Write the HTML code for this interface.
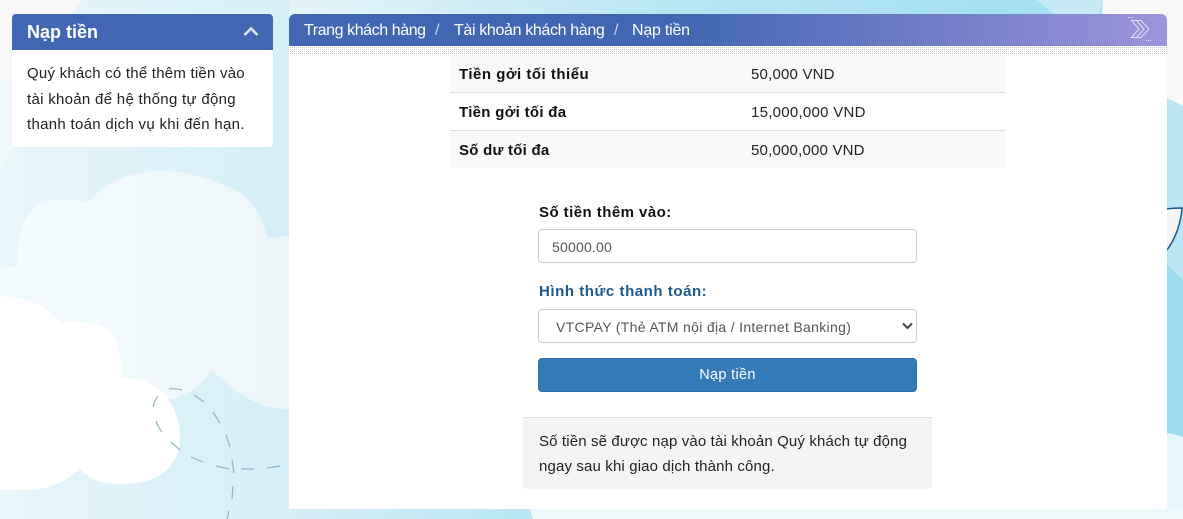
<!DOCTYPE html>
<html lang="vi">
<head>
<meta charset="utf-8">
<title>Nạp tiền</title>
<style>
html,body{margin:0;padding:0;}
body{width:1183px;height:519px;position:relative;overflow:hidden;background:#d8f0f8;font-family:"Liberation Sans","Noto Sans CJK SC",sans-serif;color:#222;}
.t{position:absolute;white-space:nowrap;font-size:15px;line-height:20px;}
.b{font-weight:bold;}
.box{position:absolute;box-sizing:border-box;}
#bg{position:absolute;left:0;top:0;}
.dots{position:absolute;left:289px;top:46px;width:878px;height:9px;background-color:#c6c6c6;background-image:linear-gradient(90deg,#fff 1px,transparent 1px),linear-gradient(180deg,#fff 1px,transparent 1px);background-size:2px 2px;}
</style>
</head>
<body>
<svg id="bg" width="1183" height="519" viewBox="0 0 1183 519">
<defs>
<linearGradient id="gTop" gradientUnits="userSpaceOnUse" x1="289" y1="0" x2="1000" y2="0"><stop offset="0" stop-color="#e4f4f9"/><stop offset="0.58" stop-color="#b6e5f4"/><stop offset="1" stop-color="#a6e0f3"/></linearGradient>
<linearGradient id="gLeft" gradientUnits="userSpaceOnUse" x1="0" y1="0" x2="289" y2="0"><stop offset="0" stop-color="#e9f6fa"/><stop offset="1" stop-color="#d4eff8"/></linearGradient>
<linearGradient id="gBot" gradientUnits="userSpaceOnUse" x1="289" y1="0" x2="530" y2="0"><stop offset="0" stop-color="#d6eff8"/><stop offset="1" stop-color="#b8e6f4"/></linearGradient>
<linearGradient id="gCloud" gradientUnits="userSpaceOnUse" x1="0" y1="0" x2="289" y2="0"><stop offset="0" stop-color="#f3fbfe"/><stop offset="1" stop-color="#eef6fa"/></linearGradient>
</defs>
<rect width="1183" height="519" fill="url(#gTop)"/>
<rect x="0" y="0" width="289" height="519" fill="url(#gLeft)"/>
<rect x="289" y="400" width="300" height="119" fill="url(#gBot)"/>
<polygon points="0,0 82,0 60,30 26,80 0,80" fill="#f7f7f7"/>
<polygon points="0,80 26,80 13,147 0,170" fill="#eff9fc"/>
<polygon points="1037,0 1103,0 1098,20 1060,20" fill="#c5e9f5"/>
<polygon points="1103,0 1183,0 1183,106 1167,98 1098,60" fill="#f8f8f8"/>
<polygon points="1167,98 1183,106 1183,280 1167,265" fill="#bbe6f4"/>
<polygon points="1167,265 1183,280 1183,519 1167,519" fill="#9cdcf0"/>
<path d="M1167 433C1173 434 1178 435 1183 437V519H1167Z" fill="#e8f7fc"/>
<path d="M530 509H1183V519H533Z" fill="#eef9fc"/>
<path d="M1167 250C1176 238 1181 222 1182 208L1167 209Z" fill="#f4f4f4"/>
<path d="M1167 209C1172 208 1178 208 1182 208C1181 222 1176 238 1167 250" fill="none" stroke="#14598a" stroke-width="1.5"/>
<path d="M0 267L18 267C16 225 30 200 60 200C70 199 80 201 89 202C110 178 140 170 165 171C190 172 215 180 235 190C255 200 262 220 268 238L289 236V409C260 410 240 395 212 371C195 392 180 398 170 399L0 420Z" fill="url(#gCloud)"/>
<path d="M0 297C25 296 45 305 61 323C80 321 100 320 112 335C120 345 122 360 122 378C140 377 160 385 172 405C180 420 182 440 178 452C170 475 150 484 120 484C100 484 88 478 79 468C70 480 50 490 25 490L0 490Z" fill="#fff"/>
<g stroke="#8fb4c9" stroke-width="1.2" fill="none">
<path d="M153 407Q154 401 158 396M169 389Q176 388 182 390M194 395L204 402M213 412L220 423M226 435L230 447M232 460L234 473M233 486L232 499M229 511L227 519M156 421Q158 427 162 432M171 442L180 450M191 457L203 462M216 466L229 469M241 469L254 469M267 468L280 466"/>
</g>
</svg>

<!-- Sidebar -->
<div class="box" style="left:12px;top:14px;width:261px;height:133px;background:#fff;border-radius:4px;"></div>
<div class="box" style="left:12px;top:14px;width:261px;height:36px;background:#4267b2;border-radius:4px 4px 0 0;"></div>
<div class="t b" style="left:27px;top:22px;color:#fff;font-size:18px;">Nạp tiền</div>
<svg style="position:absolute;left:243px;top:26px;" width="16" height="11" viewBox="0 0 16 11"><path d="M1.500 9L8 2.500L14.500 9" fill="none" stroke="#dfe4f0" stroke-width="2.600"/></svg>
<div class="t" style="left:27px;top:64px;letter-spacing:.23px;">Quý khách có thể thêm tiền vào</div>
<div class="t" style="left:27px;top:90px;letter-spacing:.3px;">tài khoản để hệ thống tự động</div>
<div class="t" style="left:27px;top:115px;letter-spacing:.3px;">thanh toán dịch vụ khi đến hạn.</div>

<!-- Main -->
<div class="box" style="left:289px;top:46px;width:878px;height:463px;background:#fff;"></div>
<div class="box" style="left:289px;top:14px;width:878px;height:32px;border-radius:6px 6px 0 0;background:linear-gradient(90deg,#4267b2 0%,#4267b2 45%,#9c94db 100%);"></div>
<div class="dots"></div>
<div class="t" style="left:304px;top:21px;color:#fff;font-size:16px;letter-spacing:-.42px;">Trang khách hàng</div>
<div class="t" style="left:435px;top:21px;color:#c9d3e8;font-size:16px;">/</div>
<div class="t" style="left:454px;top:21px;color:#fff;font-size:16px;letter-spacing:-.35px;">Tài khoản khách hàng</div>
<div class="t" style="left:614px;top:21px;color:#c9d3e8;font-size:16px;">/</div>
<div class="t" style="left:632px;top:21px;color:#fff;font-size:16px;letter-spacing:-.22px;">Nạp tiền</div>
<svg style="position:absolute;left:1125px;top:14px;" width="32" height="30" viewBox="1125 14 32 30">
<path d="M1131.500 20.500H1141L1149 29L1141 37.500H1131.500L1139 29Z M1136.500 20.500L1144 29L1136.500 37.500" fill="none" stroke="#eef0fa" stroke-width="1" opacity=".85"/>
<path d="M1128 17.500H1134M1146 40.500H1152" stroke="#dfe2f5" stroke-width="1" stroke-dasharray="1 1"/>
</svg>

<!-- Table -->
<div class="box" style="left:450px;top:55px;width:555px;height:37px;background:#f9f9f9;"></div>
<div class="box" style="left:450px;top:92px;width:555px;height:1px;background:#ddd;"></div>
<div class="box" style="left:450px;top:130px;width:555px;height:1px;background:#ddd;"></div>
<div class="box" style="left:450px;top:131px;width:555px;height:37px;background:#f9f9f9;"></div>
<div class="t b" style="left:459px;top:65px;color:#111;letter-spacing:.5px;">Tiền gởi tối thiểu</div>
<div class="t" style="left:751px;top:65px;letter-spacing:.2px;">50,000 VND</div>
<div class="t b" style="left:459px;top:103px;color:#111;letter-spacing:.3px;">Tiền gởi tối đa</div>
<div class="t" style="left:751px;top:103px;letter-spacing:.27px;">15,000,000 VND</div>
<div class="t b" style="left:459px;top:141px;color:#111;letter-spacing:.25px;">Số dư tối đa</div>
<div class="t" style="left:751px;top:141px;letter-spacing:.2px;">50,000,000 VND</div>

<!-- Form -->
<div class="t b" style="left:539px;top:203px;color:#111;letter-spacing:.45px;">Số tiền thêm vào:</div>
<div class="box" style="left:538px;top:229px;width:379px;height:34px;background:#fff;border:1px solid #ccc;border-radius:4px;"></div>
<div class="t" style="left:552px;top:237px;color:#555;font-size:14px;letter-spacing:.2px;">50000.00</div>
<div class="t b" style="left:539px;top:282px;color:#1d5a8a;letter-spacing:.55px;">Hình thức thanh toán:</div>
<div class="box" style="left:538px;top:309px;width:379px;height:34px;background:#fff;border:1px solid #ccc;border-radius:4px;"></div>
<div class="t" style="left:556px;top:317px;color:#555;font-size:14px;letter-spacing:.32px;">VTCPAY (Thẻ ATM nội địa / Internet Banking)</div>
<svg style="position:absolute;left:901px;top:321px;" width="13" height="10" viewBox="0 0 13 10"><path d="M2 2.500L6.500 7L11 2.500" fill="none" stroke="#444" stroke-width="2"/></svg>
<div class="box" style="left:538px;top:358px;width:379px;height:34px;background:#337ab7;border:1px solid #2e6da4;border-radius:4px;"></div>
<div class="t" style="left:538px;width:379px;top:365px;text-align:center;color:#fff;font-size:14.500px;letter-spacing:.3px;">Nạp tiền</div>

<!-- Note -->
<div class="box" style="left:523px;top:417px;width:409px;height:72px;background:#f4f4f4;border-top:1px solid #ddd;border-radius:0 0 2px 2px;"></div>
<div class="t" style="left:539px;top:432px;letter-spacing:.14px;">Số tiền sẽ được nạp vào tài khoản Quý khách tự động</div>
<div class="t" style="left:539px;top:457px;letter-spacing:.14px;">ngay sau khi giao dịch thành công.</div>
</body>
</html>
